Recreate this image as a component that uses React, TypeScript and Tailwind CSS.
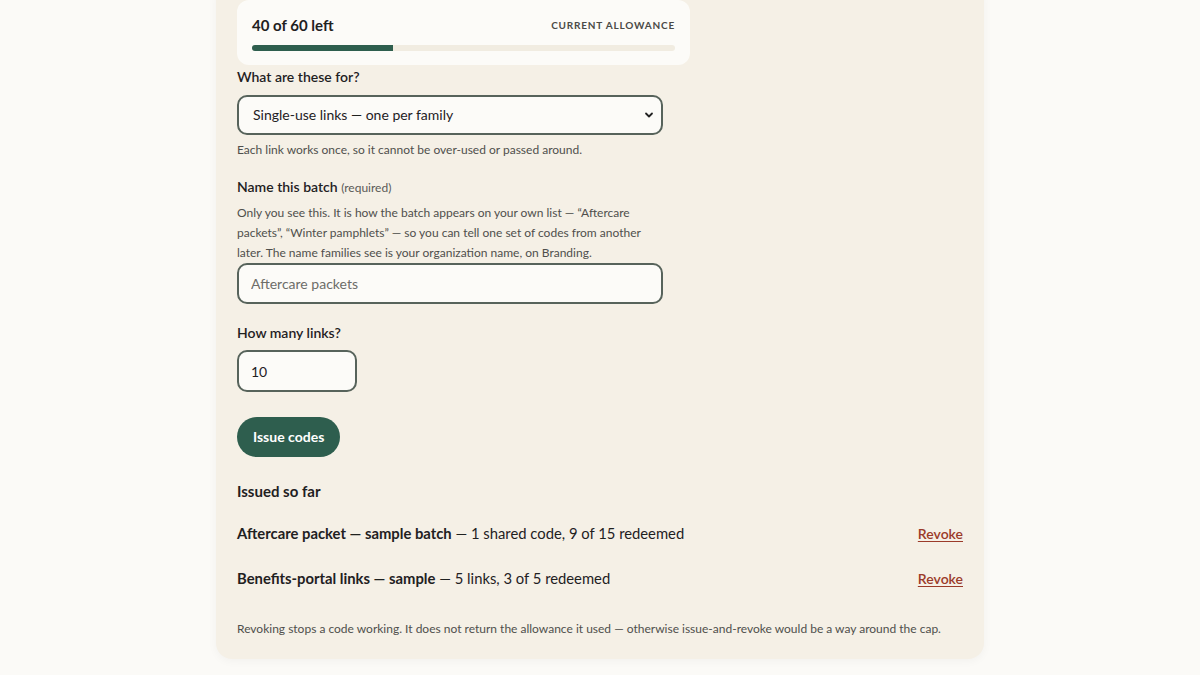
import React from 'react';

const issued = [
  { name: 'Aftercare packet — sample batch', detail: '1 shared code, 9 of 15 redeemed' },
  { name: 'Benefits-portal links — sample', detail: '5 links, 3 of 5 redeemed' },
];

export default function App() {
  const left = 40;
  const total = 60;
  const used = ((total - left) / total) * 100;

  return (
    <div className="flex min-h-screen flex-col bg-[#fbfaf7] text-[#1f211f]" style={{ fontFamily: 'Lato, "Noto Sans", sans-serif' }}>
      <div className="mx-auto w-full max-w-3xl -mt-5 rounded-2xl bg-[#f5f0e6] px-[21px] pt-5 pb-[22px] shadow-[0_2px_10px_rgba(0,0,0,0.04)]">
        {/* allowance */}
        <div className="w-[453px] rounded-xl bg-[#fcfbf8] px-[15px] pt-[13px] pb-[14px]">
          <div className="flex items-center justify-between">
            <span className="text-[15px] font-bold leading-6">
              {left} of {total} left
            </span>
            <span className="text-[10px] font-bold uppercase tracking-[0.08em] text-[#4a4a47]">Current allowance</span>
          </div>
          <div className="mt-2 h-1.5 w-full rounded-full bg-[#f1ece1]">
            <div className="h-1.5 rounded-l-full bg-[#2e5e4e]" style={{ width: `${used}%` }} />
          </div>
        </div>

        <div className="w-[426px]">
          <label className="mt-0.5 block text-sm font-semibold leading-5">What are these for?</label>
          <div className="relative mt-2">
            <select className="h-10 w-full appearance-none rounded-[10px] border-2 border-[#57635b] bg-[#fcfbf8] pl-[14px] pr-8 text-sm text-[#1f211f] outline-none">
              <option>Single-use links — one per family</option>
              <option>One shared code</option>
            </select>
            <svg className="pointer-events-none absolute right-[9px] top-1/2 -translate-y-1/2" width="10" height="10" viewBox="0 0 10 10">
              <path d="M2 3.5 L5 6.5 L8 3.5" fill="none" stroke="#222" strokeWidth="1.8" strokeLinecap="round" strokeLinejoin="round" />
            </svg>
          </div>
          <p className="mt-[7px] text-xs leading-4 text-[#4f4f4c]">Each link works once, so it cannot be over-used or passed around.</p>

          <label className="mt-[19px] block text-sm font-semibold leading-5">
            Name this batch <span className="text-xs font-normal text-[#5a5a56]">(required)</span>
          </label>
          <p className="mt-1.5 text-xs leading-5 text-[#4f4f4c]">
            Only you see this. It is how the batch appears on your own list — “Aftercare packets”, “Winter pamphlets” — so you can tell one set of codes from another later. The name families see is your organization name, on Branding.
          </p>
          <input
            className="h-[41px] w-full rounded-[10px] border-2 border-[#57635b] bg-[#fcfbf8] px-3 text-sm outline-none placeholder:text-[#6d6d69]"
            placeholder="Aftercare packets"
          />

          <label className="mt-[19px] block text-sm font-semibold leading-5">How many links?</label>
          <input
            className="mt-[7px] h-[42px] w-[120px] rounded-[10px] border-2 border-[#57635b] bg-[#fcfbf8] px-3 text-sm outline-none"
            defaultValue="10"
          />

          <div className="mt-[25px]">
            <button className="h-10 rounded-full bg-[#2e5e4e] px-4 text-sm font-bold text-white">Issue codes</button>
          </div>
        </div>

        <h3 className="mt-[22px] text-[15px] font-bold leading-6">Issued so far</h3>
        <ul className="mt-2">
          {issued.map((b) => (
            <li key={b.name} className="flex items-center justify-between py-3 text-[14.8px] leading-[21px]">
              <span>
                <strong className="font-bold">{b.name}</strong> — {b.detail}
              </span>
              <a href="#" className="text-sm font-semibold text-[#9b3b2a] underline underline-offset-2">
                Revoke
              </a>
            </li>
          ))}
        </ul>
        <p className="mt-5 text-xs leading-4 text-[#4f4f4c]">
          Revoking stops a code working. It does not return the allowance it used — otherwise issue-and-revoke would be a way around the cap.
        </p>
      </div>
    </div>
  );
}
